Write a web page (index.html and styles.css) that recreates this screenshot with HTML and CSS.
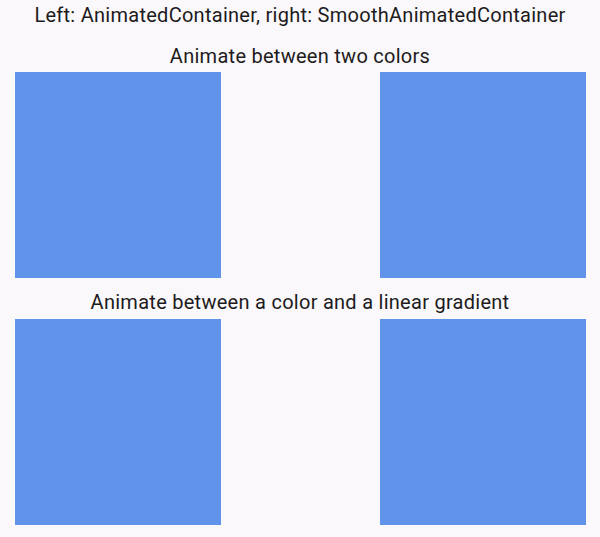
FILE: index.html
```html
<!DOCTYPE html>
<html>
<head>
<meta charset="utf-8">
<link rel="stylesheet" href="styles.css">
</head>
<body>
<div class="page">
  <div class="title">Left: AnimatedContainer, right: SmoothAnimatedContainer</div>
  <div class="heading first">Animate between two colors</div>
  <div class="row">
    <div class="box"></div>
    <div class="box"></div>
  </div>
  <div class="heading second">Animate between a color and a linear gradient</div>
  <div class="row second-row">
    <div class="box"></div>
    <div class="box"></div>
  </div>
</div>
</body>
</html>
```
FILE: styles.css
```css
html, body {
  margin: 0;
  padding: 0;
  background: #faf8fb;
}
.page {
  width: 600px;
  height: 537px;
  font-family: Roboto, "Noto Sans", sans-serif;
  color: #1d1b20;
  display: flex;
  flex-direction: column;
  padding-top: 4px;
  box-sizing: border-box;
}
.title, .heading {
  font-size: 20px;
  line-height: 23px;
  letter-spacing: 0.27px;
  text-align: center;
  height: 23px;
}
.heading.first {
  margin-top: 18px;
}
.heading.second {
  margin-top: 13px;
}
.row {
  display: flex;
  justify-content: space-between;
  padding: 0 14px 0 15px;
  margin-top: 4px;
}
.row.second-row {
  margin-top: 5px;
}
.box {
  width: 206px;
  height: 206px;
  background: #6094eb;
}
```
